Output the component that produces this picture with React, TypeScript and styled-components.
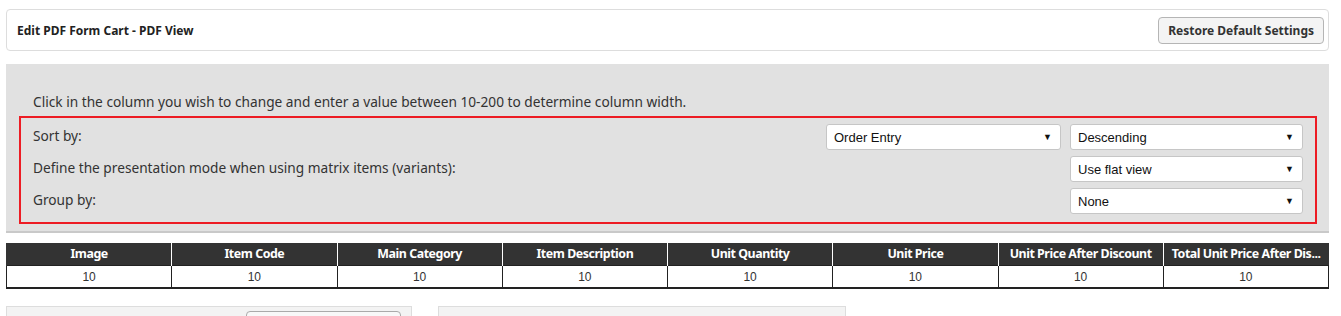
import styled, { createGlobalStyle } from 'styled-components';

const GlobalStyle = createGlobalStyle`
  html, body, #root {
    margin: 0;
    padding: 0;
    background: #fff;
  }
  html, body {
    height: 316px;
    overflow: hidden;
  }
  body {
    font-family: 'Noto Sans', 'Open Sans', sans-serif;
    color: #333;
  }
`;

const Page = styled.div`
  padding: 9px 12px 0 6px;
  display: flex;
  flex-direction: column;
`;

const HeaderPanel = styled.div`
  display: flex;
  align-items: center;
  justify-content: space-between;
  height: 39px;
  border: 1px solid #ddd;
  border-radius: 4px;
  padding: 1px 4px 0 10px;
`;

const Title = styled.h1`
  margin: 0;
  font-size: 12px;
  font-weight: 700;
  color: #222;
`;

const Button = styled.button`
  height: 27px;
  padding: 0 9px;
  font-family: 'Noto Sans', sans-serif;
  font-size: 12px;
  font-weight: 700;
  color: #333;
  background: #f4f4f4;
  border: 1px solid #b5b5b5;
  border-radius: 4px;
`;

const SettingsArea = styled.div`
  margin-top: 13px;
  background: #e1e1e1;
  border-bottom: 2px solid #c9c9c9;
  padding: 29px 12px 7px 13px;
`;

const Hint = styled.p`
  margin: 0 0 5px 14px;
  font-size: 13.7px;
  color: #333;
  line-height: 18px;
`;

const Outline = styled.div`
  border: 2px solid #ed1c24;
  padding: 6px 12px 8px 12px;
  display: flex;
  flex-direction: column;
  gap: 6px;
`;

const Row = styled.div`
  display: flex;
  align-items: flex-start;
  justify-content: space-between;
  height: 26px;
`;

const Label = styled.span`
  font-size: 13.7px;
  color: #333;
  margin-top: 2px;
`;

const Selects = styled.div`
  display: flex;
  gap: 9px;
`;

const SelectBox = styled.div<{ $width: number }>`
  width: ${(p) => p.$width}px;
  height: 26px;
  box-sizing: border-box;
  background: #fff;
  border: 1px solid #c6c6c6;
  border-radius: 3px;
  display: flex;
  align-items: center;
  justify-content: space-between;
  padding: 0 8px 0 7px;
  font-family: 'Liberation Sans', Arial, sans-serif;
  font-size: 13px;
  color: #111;
`;

const Caret = styled.span`
  font-size: 9px;
  color: #111;
`;

const Table = styled.table`
  margin-top: 10px;
  width: 1323px;
  border-collapse: collapse;
  table-layout: fixed;
`;

const HeadCell = styled.th`
  background: #333;
  color: #fff;
  font-size: 12.4px;
  font-weight: 700;
  letter-spacing: -0.45px;
  line-height: 16px;
  height: 22px;
  padding: 0 2px;
  border-left: 1px solid #fff;
  white-space: nowrap;
  overflow: hidden;
  &:first-child {
    border-left: 1px solid #333;
  }
`;

const Cell = styled.td`
  height: 21px;
  line-height: 16px;
  padding: 0;
  text-align: center;
  font-family: 'Liberation Sans', Arial, sans-serif;
  font-size: 12px;
  color: #333;
  border: 1px solid #222;
  border-bottom-width: 2px;
`;

const Bottom = styled.div`
  margin-top: 17px;
  display: flex;
  gap: 26px;
`;

const BottomPanel = styled.div<{ $width: number }>`
  width: ${(p) => p.$width}px;
  height: 30px;
  background: #f3f3f3;
  border: 1px solid #ddd;
  border-bottom: none;
  display: flex;
  justify-content: flex-end;
  padding: 4px 10px 0 0;
  box-sizing: border-box;
`;

const GhostButton = styled.div`
  width: 153px;
  height: 24px;
  border: 1px solid #aaa;
  border-radius: 4px;
  background: #f8f8f8;
`;

const columns = [
  'Image',
  'Item Code',
  'Main Category',
  'Item Description',
  'Unit Quantity',
  'Unit Price',
  'Unit Price After Discount',
  'Total Unit Price After Dis...',
];

const settings = [
  { label: 'Sort by:', selects: [{ value: 'Order Entry', width: 235 }, { value: 'Descending', width: 233 }] },
  { label: 'Define the presentation mode when using matrix items (variants):', selects: [{ value: 'Use flat view', width: 233 }] },
  { label: 'Group by:', selects: [{ value: 'None', width: 233 }] },
];

export default function App() {
  return (
    <>
      <GlobalStyle />
      <Page>
        <HeaderPanel>
          <Title>Edit PDF Form Cart - PDF View</Title>
          <Button>Restore Default Settings</Button>
        </HeaderPanel>
        <SettingsArea>
          <Hint>Click in the column you wish to change and enter a value between 10-200 to determine column width.</Hint>
          <Outline>
            {settings.map((s) => (
              <Row key={s.label}>
                <Label>{s.label}</Label>
                <Selects>
                  {s.selects.map((sel) => (
                    <SelectBox key={sel.value} $width={sel.width}>
                      {sel.value}
                      <Caret>▼</Caret>
                    </SelectBox>
                  ))}
                </Selects>
              </Row>
            ))}
          </Outline>
        </SettingsArea>
        <Table>
          <thead>
            <tr>
              {columns.map((c) => (
                <HeadCell key={c}>{c}</HeadCell>
              ))}
            </tr>
          </thead>
          <tbody>
            <tr>
              {columns.map((c) => (
                <Cell key={c}>10</Cell>
              ))}
            </tr>
          </tbody>
        </Table>
        <Bottom>
          <BottomPanel $width={406}>
            <GhostButton />
          </BottomPanel>
          <BottomPanel $width={408} />
        </Bottom>
      </Page>
    </>
  );
}
